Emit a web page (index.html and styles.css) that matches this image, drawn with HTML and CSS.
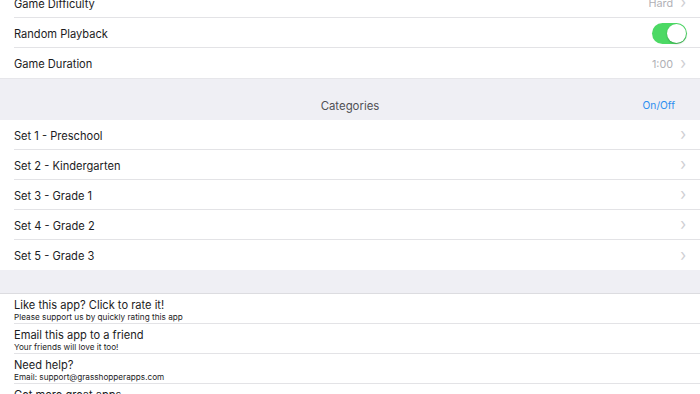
FILE: index.html
```html
<!DOCTYPE html>
<html>
<head>
<meta charset="utf-8">
<link rel="stylesheet" href="styles.css">
</head>
<body>
<div class="page">
  <div class="group">
    <div class="row"><span class="label">Game Difficulty</span><span class="value">Hard</span><span class="chev">&#8250;</span></div>
    <div class="row"><span class="label">Random Playback</span><span class="switch"><span class="knob"></span></span></div>
    <div class="row last"><span class="label">Game Duration</span><span class="value">1:00</span><span class="chev">&#8250;</span></div>
  </div>
  <div class="section-head">
    <span class="head-title">Categories</span>
    <span class="head-action">On/Off</span>
  </div>
  <div class="group">
    <div class="row"><span class="label">Set 1 - Preschool</span><span class="chev">&#8250;</span></div>
    <div class="row"><span class="label">Set 2 - Kindergarten</span><span class="chev">&#8250;</span></div>
    <div class="row"><span class="label">Set 3 - Grade 1</span><span class="chev">&#8250;</span></div>
    <div class="row"><span class="label">Set 4 - Grade 2</span><span class="chev">&#8250;</span></div>
    <div class="row last"><span class="label">Set 5 - Grade 3</span><span class="chev">&#8250;</span></div>
  </div>
  <div class="gap"></div>
  <div class="group info">
    <div class="irow"><div class="ititle">Like this app? Click to rate it!</div><div class="isub">Please support us by quickly rating this app</div></div>
    <div class="irow"><div class="ititle">Email this app to a friend</div><div class="isub">Your friends will love it too!</div></div>
    <div class="irow"><div class="ititle">Need help?</div><div class="isub">Email: support@grasshopperapps.com</div></div>
    <div class="irow"><div class="ititle">Get more great apps</div><div class="isub">More apps from Grasshopper Apps</div></div>
  </div>
</div>
</body>
</html>
```

FILE: styles.css
```css
html, body {
  margin: 0;
  padding: 0;
  background: #ffffff;
  overflow: hidden;
}
body {
  width: 700px;
  height: 394px;
  font-family: Inter, "Noto Sans", sans-serif;
  color: #1c1c1e;
}
.page {
  margin-top: -12px;
}
.group {
  background: #ffffff;
}
.row {
  height: 30px;
  margin-left: 14px;
  padding-right: 14px;
  padding-top: 2px;
  display: flex;
  align-items: center;
  border-bottom: 1px solid #e3e3e6;
  box-sizing: border-box;
}
.row.last {
  border-bottom: none;
}
.label {
  font-size: 11.1px;
  flex: 1;
}
.value {
  font-size: 10.8px;
  color: #b0b0b5;
  margin-right: 7px;
}
.chev {
  font-size: 17px;
  line-height: 1;
  color: #cfcfd3;
  width: 6px;
  margin-top: -2px;
  transform: scaleX(0.9);
}
.switch {
  width: 35px;
  height: 21px;
  border-radius: 11px;
  background: #4cd964;
  position: relative;
  margin-right: -1px;
  margin-top: -1px;
}
.knob {
  position: absolute;
  right: 1px;
  top: 1px;
  width: 19px;
  height: 19px;
  border-radius: 50%;
  background: #ffffff;
  box-shadow: 0 1px 2px rgba(0,0,0,0.25);
}
.section-head {
  height: 42px;
  background: #efeff4;
  border-top: 1px solid #e6e6ea;
  box-sizing: border-box;
  display: flex;
  align-items: flex-end;
  justify-content: center;
  padding-bottom: 7px;
  position: relative;
}
.head-title {
  font-size: 11.4px;
  color: #505055;
}
.head-action {
  position: absolute;
  right: 25px;
  bottom: 9px;
  font-size: 10.2px;
  color: #2c8ef0;
}
.gap {
  height: 23px;
  background: #efeff4;
  border-bottom: 1px solid #dcdce0;
}
.irow {
  height: 30px;
  margin-left: 14px;
  border-bottom: 1px solid #e3e3e6;
  box-sizing: border-box;
  display: flex;
  flex-direction: column;
  justify-content: center;
  padding-top: 4px;
}
.ititle {
  font-size: 11.1px;
  line-height: 13px;
  color: #1c1c1e;
}
.isub {
  font-size: 8.2px;
  line-height: 10px;
  color: #1c1c1e;
}
```
